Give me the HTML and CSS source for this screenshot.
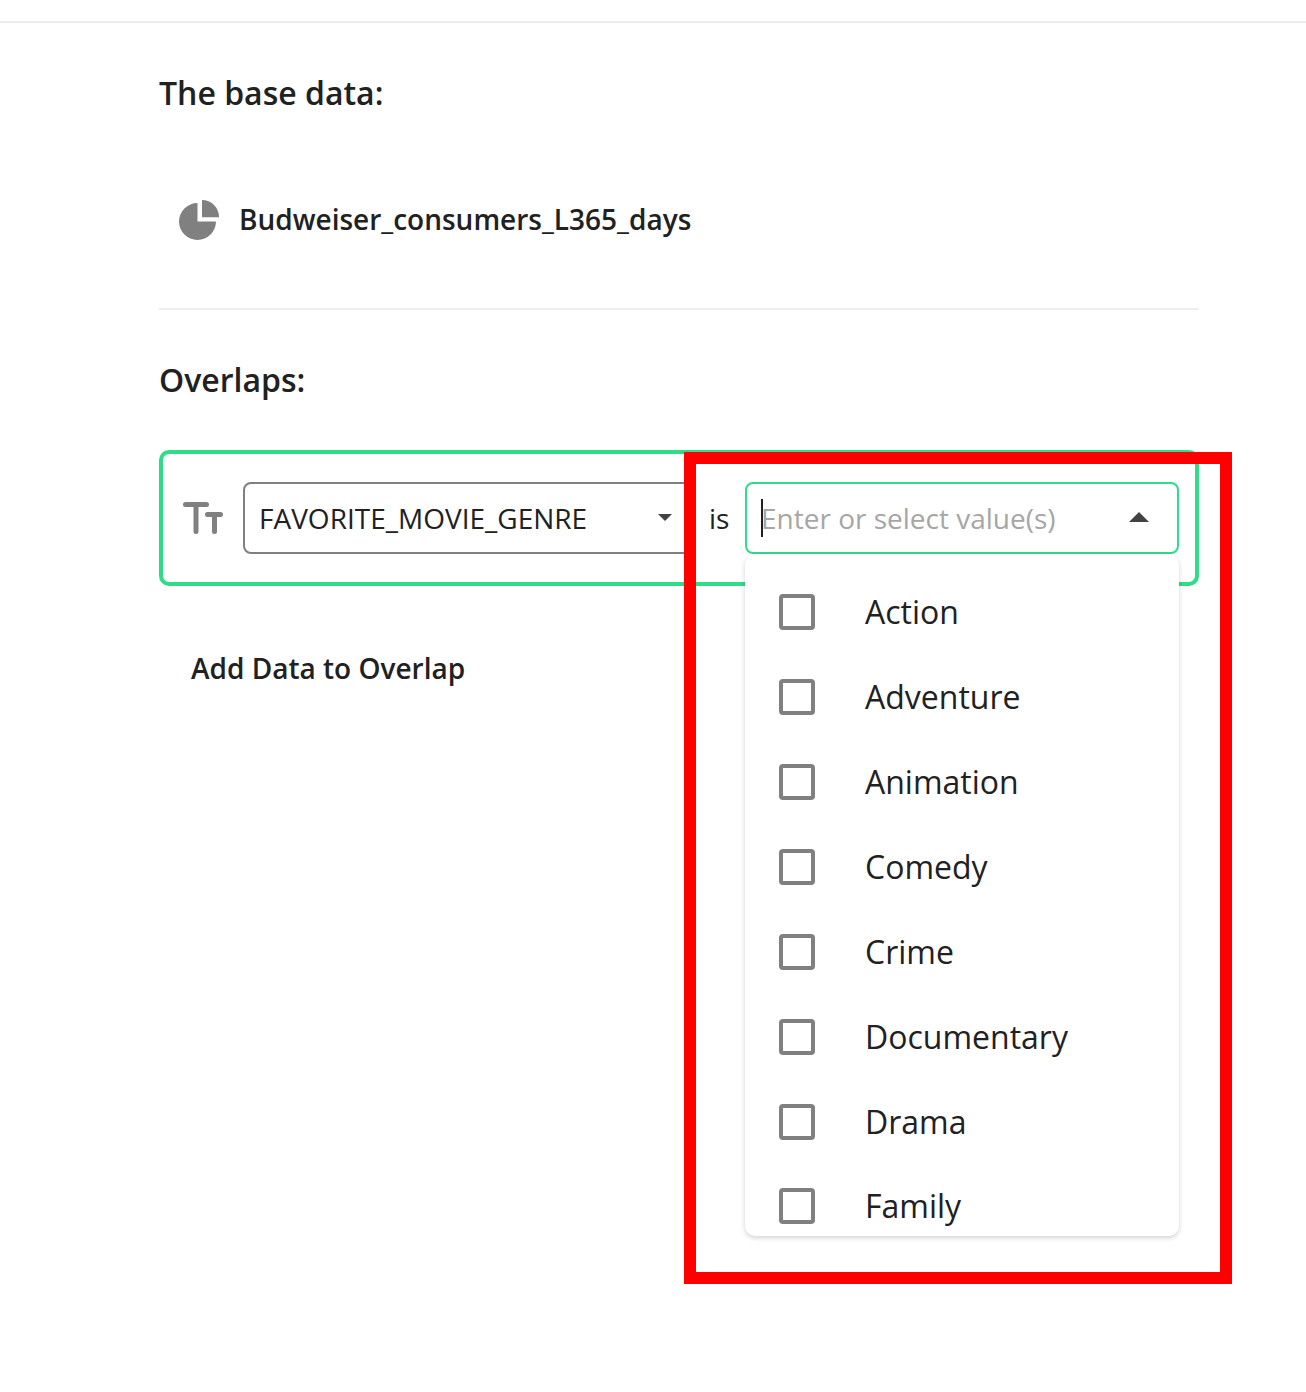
FILE: index.html
```html
<!DOCTYPE html>
<html lang="en">
<head>
  <meta charset="UTF-8" />
  <title>Overlaps</title>
  <link rel="stylesheet" href="styles.css">
</head>
<body>
  <div class="barra-top"></div>

  <div class="container">
    <h2 class="titulo">The base data:</h2>

    <div class="base-row">
      <svg class="icono-pie" width="40" height="40" viewBox="0 0 40 40">
        <path d="M18.500 3V21.500H37A18.500 18.500 0 1 1 18.500 3Z" fill="#808080"/>
        <path d="M23 0A17 17 0 0 1 40 17V17.300H23Z" fill="#808080"/>
      </svg>
      <span class="base-nombre">Budweiser_consumers_L365_days</span>
    </div>

    <div class="separador"></div>

    <h2 class="titulo titulo-overlaps">Overlaps:</h2>

    <div class="overlap-card">
      <svg class="icono-texto" width="40" height="34" viewBox="0 0 40 34">
        <path d="M2.500 3.500H23.500M13 3.500V30.500M24.500 13.500H37.500M31.500 13.500V30.500" fill="none" stroke="#808080" stroke-width="5" stroke-linecap="round"/>
      </svg>

      <div class="select-campo">
        <span>FAVORITE_MOVIE_GENRE</span>
        <span class="caret-abajo"></span>
      </div>

      <span class="operador">is</span>

      <div class="select-valores">
        <span class="cursor"></span>
        <span class="placeholder">Enter or select value(s)</span>
        <span class="caret-arriba"></span>

        <div class="dropdown">
          <div class="opcion"><span class="check"></span>Action</div>
          <div class="opcion"><span class="check"></span>Adventure</div>
          <div class="opcion"><span class="check"></span>Animation</div>
          <div class="opcion"><span class="check"></span>Comedy</div>
          <div class="opcion"><span class="check"></span>Crime</div>
          <div class="opcion"><span class="check"></span>Documentary</div>
          <div class="opcion"><span class="check"></span>Drama</div>
          <div class="opcion"><span class="check"></span>Family</div>
        </div>
      </div>
    </div>

    <div class="add-data">Add Data to Overlap</div>
  </div>

  <div class="marco-rojo"></div>
</body>
</html>
```

FILE: styles.css
```css
body {
  margin: 0;
  padding: 0;
  font-family: 'Open Sans', sans-serif;
  background-color: #ffffff;
  color: #212121;
  height: 1392px;
  overflow: hidden;
  position: relative;
}

.barra-top {
  height: 21px;
  border-bottom: 2px solid #eeeeee;
}

.container {
  width: 1040px;
  margin-left: 159px;
}

.titulo {
  margin: 0;
  font-size: 32px;
  line-height: 40px;
  font-weight: 600;
  padding-top: 50px;
}

.titulo-overlaps {
  padding-top: 50px;
}

.base-row {
  display: flex;
  align-items: center;
  gap: 20px;
  height: 40px;
  margin-top: 87px;
  padding-left: 20px;
}

.base-nombre {
  font-size: 28px;
  font-weight: 600;
  position: relative;
  top: -1px;
}

.separador {
  height: 2px;
  background-color: #eeeeee;
  margin-top: 68px;
}

.overlap-card {
  display: flex;
  align-items: center;
  box-sizing: border-box;
  height: 136px;
  margin-top: 50px;
  padding: 0 16px 0 20px;
  border: 4px solid #2fdc87;
  border-radius: 10px;
}

.icono-texto {
  flex: none;
}

.select-campo {
  display: flex;
  align-items: center;
  justify-content: space-between;
  box-sizing: border-box;
  width: 450px;
  height: 72px;
  margin-left: 20px;
  padding: 0 19px 0 14px;
  border: 2px solid #808080;
  border-radius: 8px;
  font-size: 28px;
}

.caret-abajo {
  width: 0;
  height: 0;
  margin-top: -2px;
  border-left: 7px solid transparent;
  border-right: 7px solid transparent;
  border-top: 7px solid #424242;
}

.operador {
  font-size: 28px;
  margin-left: 16px;
  width: 36px;
}

.select-valores {
  position: relative;
  display: flex;
  align-items: center;
  box-sizing: border-box;
  width: 434px;
  height: 72px;
  padding: 0 28px 0 14px;
  border: 2px solid #2fdc87;
  border-radius: 8px;
  font-size: 28px;
}

.cursor {
  width: 2px;
  height: 38px;
  margin-right: -2px;
  background-color: #212121;
  flex: none;
}

.placeholder {
  color: #a6a6a6;
  flex: 1;
}

.caret-arriba {
  width: 0;
  height: 0;
  margin-top: -2px;
  border-left: 10px solid transparent;
  border-right: 10px solid transparent;
  border-bottom: 10px solid #424242;
}

.dropdown {
  position: absolute;
  left: -2px;
  top: 70px;
  box-sizing: border-box;
  width: 434px;
  height: 682px;
  padding-top: 16px;
  overflow: hidden;
  background-color: #ffffff;
  border-radius: 10px;
  box-shadow: 0 2px 5px rgba(0, 0, 0, 0.18);
}

.opcion {
  display: flex;
  align-items: center;
  gap: 50px;
  height: 84.860px;
  padding-left: 34px;
  font-size: 32px;
  line-height: 42px;
}

.check {
  width: 36px;
  height: 36px;
  box-sizing: border-box;
  border: 4px solid #808080;
  border-radius: 4px;
  flex: none;
}

.add-data {
  font-size: 28px;
  font-weight: 600;
  line-height: 38px;
  margin-top: 63px;
  padding-left: 32px;
}

.marco-rojo {
  position: absolute;
  left: 684px;
  top: 452px;
  width: 548px;
  height: 832px;
  box-sizing: border-box;
  border: 12px solid #ff0000;
  pointer-events: none;
}
```
